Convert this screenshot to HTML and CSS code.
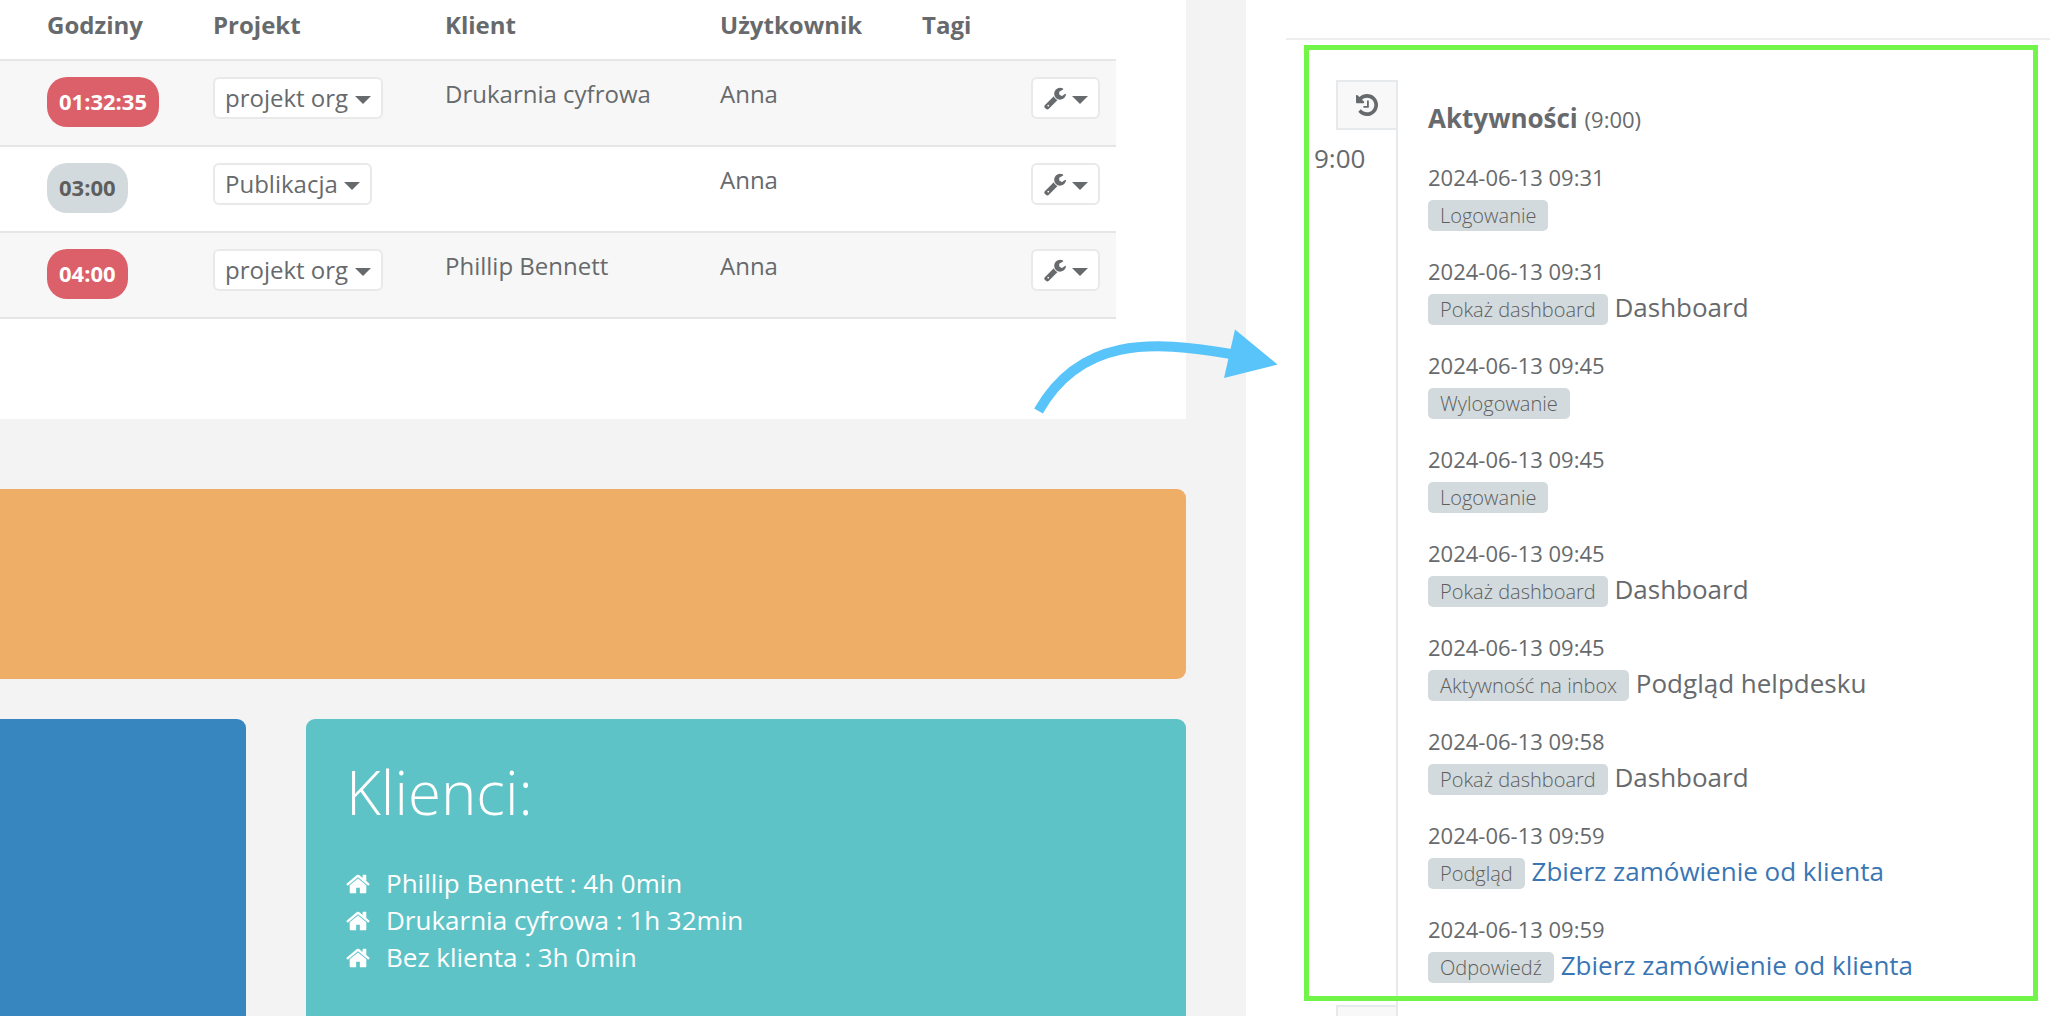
FILE: index.html
```html
<!DOCTYPE html>
<html lang="pl">
<head>
<meta charset="utf-8">
<meta name="viewport" content="width=device-width, initial-scale=1">
<title>Aktywności</title>
<link rel="stylesheet" href="styles.css">
</head>
<body>
<svg class="sprite" aria-hidden="true">
  <symbol id="wrench" viewBox="0 0 1664 1792"><path d="M384 1472q0-26-19-45t-45-19-45 19-19 45 19 45 45 19 45-19 19-45zm644-420l-682 682q-37 37-90 37-52 0-91-37l-106-108q-38-36-38-90 0-53 38-91l681-681q39 98 114.500 173.500t173.500 114.500zm634-435q0 39-23 106-47 134-164.500 217.500t-258.500 83.500q-185 0-316.500-131.500t-131.500-316.500 131.500-316.500 316.500-131.500q58 0 121.500 16.500t107.500 46.500q16 11 16 28t-16 28l-293 169v224l193 107q5-3 79-48.500t135.500-81 70.500-35.500q15 0 23.500 10t8.500 25z"/></symbol>
  <symbol id="history" viewBox="0 0 1536 1792"><path d="M1536 896q0 156-61 298t-164 245-245 164-298 61q-172 0-327-72.500t-264-204.500q-7-10-6.500-22.500t8.500-20.500l137-138q10-9 25-9 16 2 23 12 73 95 179 147t225 52q104 0 198.500-40.500t163.500-109.500 109.500-163.500 40.500-198.500-40.500-198.500-109.500-163.500-163.500-109.500-198.500-40.500q-98 0-188 35.500t-160 101.500l137 138q31 30 14 69-17 40-59 40h-448q-26 0-45-19t-19-45v-448q0-42 40-59 39-17 69 14l130 129q107-101 244.500-156.500t284.500-55.500q156 0 298 61t245 164 164 245 61 298zm-640-288v448q0 14-9 23t-23 9h-320q-14 0-23-9t-9-23v-64q0-14 9-23t23-9h224v-352q0-14 9-23t23-9h64q14 0 23 9t9 23z"/></symbol>
  <symbol id="home" viewBox="64 0 1664 1792"><path d="M1472 992v480q0 26-19 45t-45 19h-384v-384h-256v384h-384q-26 0-45-19t-19-45v-480q0-1 .5-3t.5-3l575-474 575 474q1 2 1 6zm223-69l-62 74q-8 9-21 11h-3q-13 0-21-7l-692-577-692 577q-12 8-24 7-13-2-21-11l-62-74q-8-10-7-23.500t11-21.500l719-599q32-26 76-26t76 26l244 204v-195q0-14 9-23t23-9h192q14 0 23 9t9 23v408l219 182q10 8 11 21.500t-7 23.500z"/></symbol>
  <symbol id="caret" viewBox="0 0 16 8"><path d="M0 0h16l-8 8z"/></symbol>
</svg>
<div class="shell">
  <main class="main">
    <section class="panel">
      <table class="times">
        <colgroup><col class="c-hours"><col class="c-project"><col class="c-client"><col class="c-user"><col class="c-tags"><col class="c-menu"></colgroup>
        <thead>
          <tr><th>Godziny</th><th>Projekt</th><th>Klient</th><th>Użytkownik</th><th>Tagi</th><th></th></tr>
        </thead>
        <tbody>
          <tr>
            <td><span class="time time-red">01:32:35</span></td>
            <td><span class="picker"><select aria-label="Projekt"><option>projekt org</option></select><svg class="caret"><use href="#caret"/></svg></span></td>
            <td>Drukarnia cyfrowa</td><td>Anna</td><td></td>
            <td><button class="tool" type="button" aria-label="Opcje"><svg class="wrench"><use href="#wrench"/></svg><svg class="caret"><use href="#caret"/></svg></button></td>
          </tr>
          <tr>
            <td><span class="time">03:00</span></td>
            <td><span class="picker"><select aria-label="Projekt"><option>Publikacja</option></select><svg class="caret"><use href="#caret"/></svg></span></td>
            <td></td><td>Anna</td><td></td>
            <td><button class="tool" type="button" aria-label="Opcje"><svg class="wrench"><use href="#wrench"/></svg><svg class="caret"><use href="#caret"/></svg></button></td>
          </tr>
          <tr>
            <td><span class="time time-red">04:00</span></td>
            <td><span class="picker"><select aria-label="Projekt"><option>projekt org</option></select><svg class="caret"><use href="#caret"/></svg></span></td>
            <td>Phillip Bennett</td><td>Anna</td><td></td>
            <td><button class="tool" type="button" aria-label="Opcje"><svg class="wrench"><use href="#wrench"/></svg><svg class="caret"><use href="#caret"/></svg></button></td>
          </tr>
        </tbody>
      </table>
    </section>
    <section class="card card-orange"></section>
    <div class="cards">
      <section class="card card-blue"></section>
      <section class="card card-teal">
        <h1>Klienci:</h1>
        <ul class="clients">
          <li><svg class="home"><use href="#home"/></svg>Phillip Bennett : 4h 0min</li>
          <li><svg class="home"><use href="#home"/></svg>Drukarnia cyfrowa : 1h 32min</li>
          <li><svg class="home"><use href="#home"/></svg>Bez klienta : 3h 0min</li>
        </ul>
      </section>
    </div>
    <svg class="arrow" viewBox="1030 320 260 100" aria-hidden="true">
      <path class="shaft" d="M1038.500 411C1080 338 1150 340 1231 354"/>
      <path class="head" d="M1235 329.500L1277.500 364.500 1224 378z"/>
    </svg>
  </main>
  <aside class="side">
    <hr>
    <div class="timeline">
      <article class="item highlighted">
        <div class="when">
          <span class="mark"><svg class="history"><use href="#history"/></svg></span>
          <span class="hour">9:00</span>
        </div>
        <div class="what">
          <h2>Aktywności <small>(9:00)</small></h2>
          <ul class="events">
            <li><time>2024-06-13 09:31</time><p><span class="label">Logowanie</span></p></li>
            <li><time>2024-06-13 09:31</time><p><span class="label">Pokaż dashboard</span> Dashboard</p></li>
            <li><time>2024-06-13 09:45</time><p><span class="label">Wylogowanie</span></p></li>
            <li><time>2024-06-13 09:45</time><p><span class="label">Logowanie</span></p></li>
            <li><time>2024-06-13 09:45</time><p><span class="label">Pokaż dashboard</span> Dashboard</p></li>
            <li><time>2024-06-13 09:45</time><p><span class="label">Aktywność na inbox</span> Podgląd helpdesku</p></li>
            <li><time>2024-06-13 09:58</time><p><span class="label">Pokaż dashboard</span> Dashboard</p></li>
            <li><time>2024-06-13 09:59</time><p><span class="label">Podgląd</span> <a href="#">Zbierz zamówienie od klienta</a></p></li>
            <li><time>2024-06-13 09:59</time><p><span class="label">Odpowiedź</span> <a href="#">Zbierz zamówienie od klienta</a></p></li>
          </ul>
        </div>
      </article>
      <article class="item">
        <div class="when"><span class="mark"></span></div>
        <div class="what"></div>
      </article>
    </div>
  </aside>
</div>
</body>
</html>
```
FILE: styles.css
```css
* { box-sizing: border-box; }

body {
  margin: 0;
  background: #f3f3f3;
  color: #676a6c;
  font: 26px/37px "Open Sans", "Noto Sans", sans-serif;
}

h1, h2, p, ul { margin: 0; padding: 0; }
ul { list-style: none; }
svg { display: block; flex: none; fill: currentColor; }
a { color: #3a76b4; text-decoration: none; }
.sprite { position: absolute; width: 0; height: 0; }

.shell {
  display: grid;
  grid-template-columns: 623fr 402fr;
  height: 100vh;
  overflow: hidden;
}

/* Left column */
.main {
  position: relative;
  display: flex;
  flex-direction: column;
  min-width: 0;
  padding-right: 60px;
}

.panel {
  margin-bottom: 70px;
  padding: 0 70px 100px 0;
  background: #fff;
}

.times {
  width: 100%;
  table-layout: fixed;
  border-spacing: 0;
  font-size: 24px;
  line-height: 34px;
}
.c-hours { width: 197px; }
.c-project { width: 232px; }
.c-client { width: 275px; }
.c-user { width: 202px; }
.c-tags { width: 109px; }
.c-menu { width: 101px; }

.times th, .times td {
  padding: 16px;
  border-bottom: 2px solid #e6e6e6;
  text-align: left;
  vertical-align: top;
}
.times th { padding-top: 8px; height: 61px; font-weight: 700; }
.times td { height: 86px; }
.times th:first-child, .times td:first-child { padding-left: 47px; }
.times tbody tr:nth-child(odd) { background: #f7f7f7; }

.time {
  display: inline-flex;
  align-items: center;
  height: 50px;
  padding: 0 12px 2px;
  border-radius: 20px;
  background: #d2dadd;
  color: #5e5e5e;
  font-size: 22px;
  font-weight: 700;
  vertical-align: top;
}
.time-red { background: #dc6069; color: #fff; }

.picker { position: relative; display: inline-block; vertical-align: top; }
.picker select {
  display: block;
  appearance: none;
  height: 42px;
  padding: 0 32px 0 10px;
  border: 2px solid #e9e9e9;
  border-radius: 6px;
  background: #fff;
  color: inherit;
  font: inherit;
}
.caret { width: 16px; height: 8px; }
.picker .caret { position: absolute; top: 19px; right: 12px; pointer-events: none; }

.tool {
  display: flex;
  align-items: center;
  justify-content: center;
  gap: 6px;
  width: 69px;
  height: 42px;
  padding: 0;
  border: 2px solid #e9e9e9;
  border-radius: 6px;
  background: #fff;
  color: inherit;
}
.tool .caret { margin-top: 4px; }
.wrench { width: 22px; height: 24px; }

.card { border-radius: 9px; color: #fff; }
.card-orange { height: 190px; margin-bottom: 40px; border-radius: 0 9px 9px 0; background: #eeae67; }
.cards {
  display: grid;
  flex: 1;
  grid-template-columns: 246fr 880fr;
  gap: 60px;
}
.card-blue { border-radius: 0 9px 0 0; background: #3786c0; }
.card-teal { padding: 40px; border-radius: 9px 9px 0 0; background: #5ec3c7; }
.card-teal h1 { margin-bottom: 40px; font-size: 60px; font-weight: 300; line-height: 66px; }
.clients li { display: flex; align-items: center; gap: 16px; }
.home { width: 24px; height: 26px; }

/* Pointer from the summary to the activity log */
.arrow { position: absolute; top: 320px; right: -44px; width: 260px; height: 100px; z-index: 1; }
.shaft { fill: none; stroke: #59c4f9; stroke-width: 10px; }
.head { fill: #59c4f9; }

/* Activity log */
.side { min-width: 0; padding: 38px 0 0 40px; background: #fff; }
.side hr { margin: 0 0 40px; border: 0; border-top: 2px solid #eee; }

.item { position: relative; display: flex; }
.highlighted::after {
  content: "";
  position: absolute;
  top: -35px;
  right: 12px;
  bottom: 4px;
  left: 18px;
  border: 5px solid #72f549;
}
.when { display: flex; flex-direction: column; width: 112px; padding-left: 28px; }
.mark {
  display: flex;
  align-items: center;
  justify-content: center;
  align-self: flex-end;
  width: 62px;
  height: 50px;
  border: 2px solid #e7eaec;
  background: #f8f8f8;
}
.history { width: 22px; height: 26px; }
.hour { margin-top: 10px; }
.what {
  flex: 1;
  margin-left: -2px;
  padding: 20px 30px 0;
  border-left: 2px solid #e7eaec;
}
.what h2 { margin-bottom: 21px; font-size: 26px; font-weight: 700; }
.what small { font-size: 22px; font-weight: 400; }
.events li { margin-bottom: 21px; }
.events time { display: block; font-size: 22px; line-height: 36px; }
.label {
  display: inline-block;
  padding: 0 12px;
  border-radius: 5px;
  background: #d2dadd;
  color: #5e5e5e;
  font-size: 20px;
  font-weight: 300;
  line-height: 31px;
}
```
